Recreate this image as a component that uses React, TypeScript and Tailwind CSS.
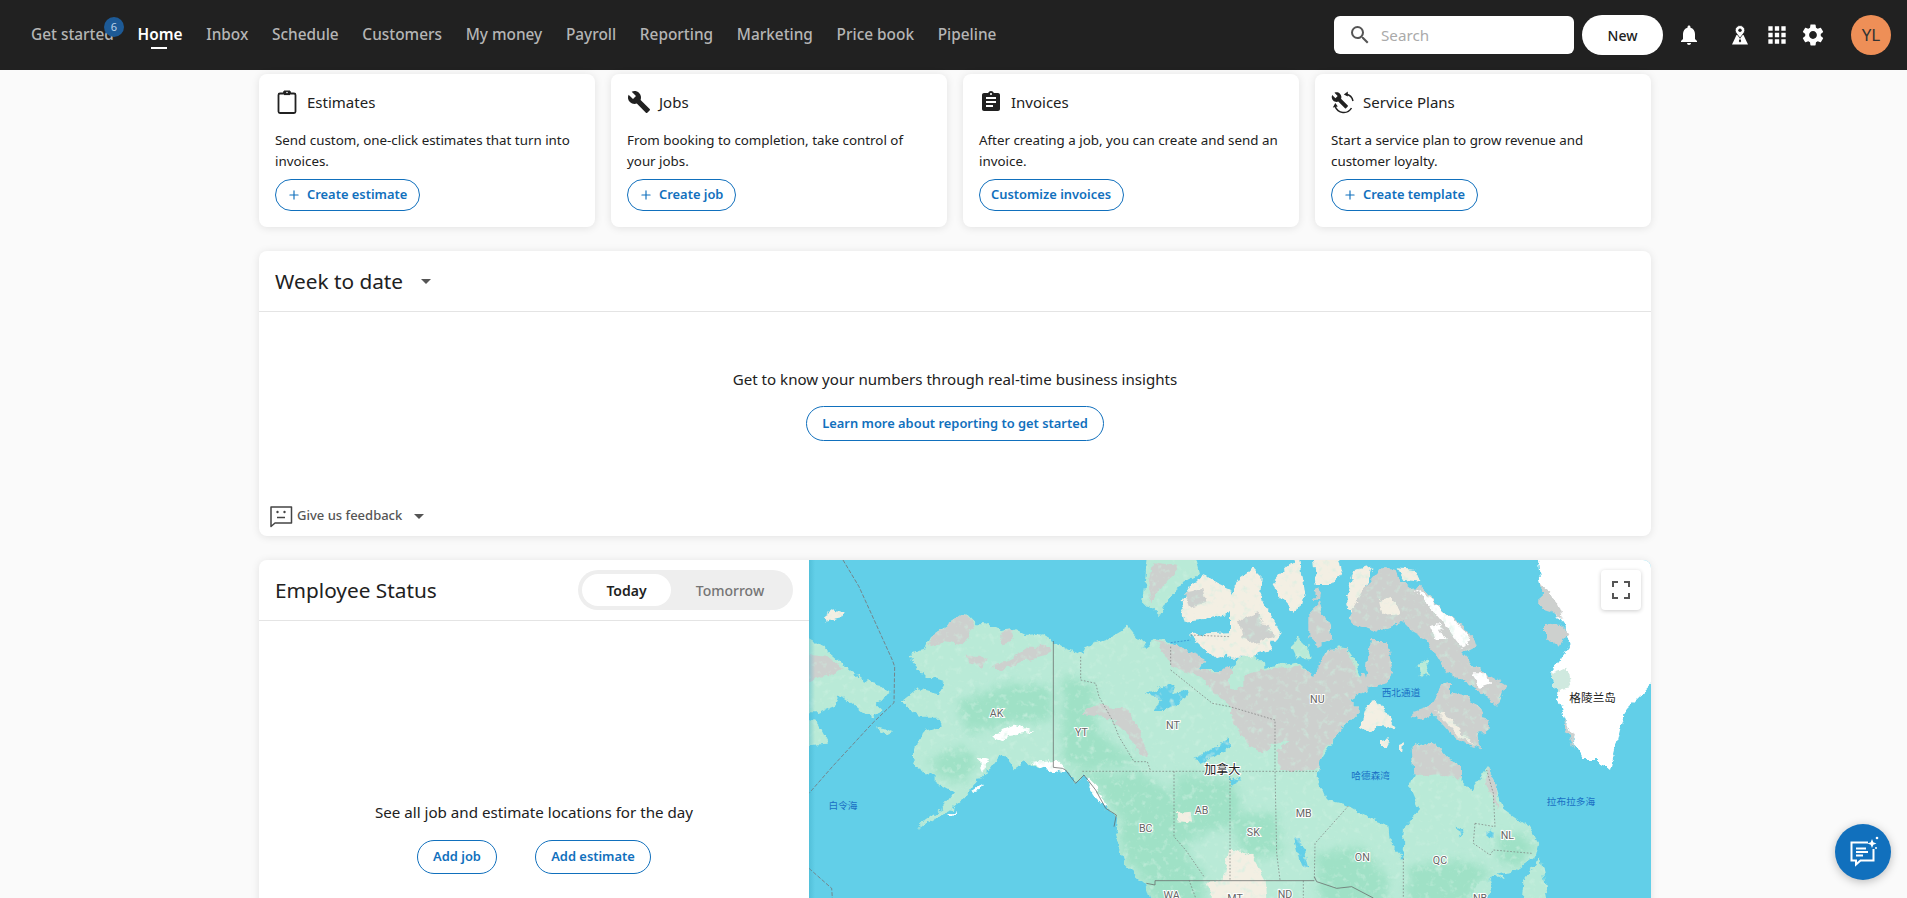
import type { ReactNode } from 'react';
import { Plus } from 'lucide-react';
import {
  MdApps,
  MdArrowDropDown,
  MdAssignment,
  MdBuild,
  MdNotifications,
  MdSearch,
  MdSettings,
} from 'react-icons/md';

const navLinks = ['Inbox', 'Schedule', 'Customers', 'My money', 'Payroll', 'Reporting', 'Marketing', 'Price book', 'Pipeline'];

function ClipboardIcon() {
  return (
    <svg width="24" height="24" viewBox="0 0 24 24" fill="none">
      <path d="M5 3.500h4V2h6v1.500h4a1.500 1.500 0 0 1 1.500 1.500v16.500A1.500 1.500 0 0 1 19 23H5a1.500 1.500 0 0 1-1.500-1.500V5A1.500 1.500 0 0 1 5 3.500Z" stroke="#212121" strokeWidth="1.800" strokeLinejoin="round" />
      <path d="M9 0.500h6v4.600H9z" fill="#212121" />
      <circle cx="12" cy="2.500" r="0.800" fill="#fff" />
    </svg>
  );
}

function ServicePlanIcon() {
  return (
    <svg width="24" height="24" viewBox="0 0 24 24" fill="none">
      <g transform="translate(0 1.500) scale(0.74)">
        <path fill="#212121" d="M22.700 19l-9.100-9.100c.9-2.300.4-5-1.500-6.900-2-2-5-2.400-7.400-1.300L9 6 6 9 1.600 4.700C.4 7.100.9 10.100 2.900 12.100c1.900 1.900 4.600 2.400 6.900 1.500l9.100 9.100c.4.400 1 .4 1.400 0l2.300-2.300c.5-.4.5-1.100.1-1.400z" />
      </g>
      <path d="M15 4.200a8.500 8.500 0 0 1 7 6.800" stroke="#212121" strokeWidth="1.500" />
      <path d="M4.200 16.500a9 9 0 0 0 16.300 1.500" stroke="#212121" strokeWidth="1.500" />
      <path d="M12.800 4.600l4-3v5zM1.800 17.500l5-1-2.500-3.500z" fill="#212121" />
    </svg>
  );
}

function TerritoryIcon() {
  return (
    <svg width="24" height="24" viewBox="0 0 24 24" fill="#fff">
      <path d="M8.500 12h7L20 21.500H4Z" />
      <path d="M12 2.500a4.800 4.800 0 0 1 4.800 4.800c0 2.700-3 4.700-4.800 8-1.800-3.300-4.800-5.300-4.800-8A4.800 4.800 0 0 1 12 2.500Z" stroke="#212121" strokeWidth="0.800" />
      <circle cx="12" cy="7.200" r="1.700" fill="#212121" />
      <path d="M11.200 16.500h1.600l.4 1.800-1.200 1.300-1.200-1.300Z" fill="#212121" />
    </svg>
  );
}

function FeedbackIcon() {
  return (
    <svg width="24" height="24" viewBox="0 0 24 24" fill="none">
      <path d="M2 3h20.500v16H6l-4 3.500Z" stroke="#444" strokeWidth="1.500" strokeLinejoin="round" />
      <circle cx="8.500" cy="8" r="1.200" fill="#444" />
      <circle cx="15.500" cy="8" r="1.200" fill="#444" />
      <path d="M8 13.500h8" stroke="#444" strokeWidth="1.500" />
    </svg>
  );
}

function OutlineButton({ children, className = '' }: { children: ReactNode; className?: string }) {
  return (
    <button className={`flex items-center justify-center rounded-full border border-[#1170bd] bg-white text-[12.9px] font-semibold text-[#1170bd] ${className}`}>
      {children}
    </button>
  );
}

function StartCard({ icon, title, text, action, plus }: { icon: ReactNode; title: string; text: string; action: string; plus?: boolean }) {
  return (
    <div className="h-[153px] rounded-lg bg-white px-4 pt-4 shadow-[0_1px_8px_rgba(0,0,0,0.1)]">
      <div className="flex h-6 items-center gap-2">
        {icon}
        <span className="text-[15px] text-[#212121]">{title}</span>
      </div>
      <p className="mt-4 text-[13.35px] leading-[21px] text-[#212121]">{text}</p>
      <OutlineButton className="mt-[7px] h-8 w-fit gap-[6px] pl-[11px] pr-3">
        {plus && <Plus size={14} strokeWidth={2} />}
        {action}
      </OutlineButton>
    </div>
  );
}

function TopNav() {
  return (
    <header className="flex h-[70px] items-center bg-[#212121] pl-[31px] pr-4">
      <nav className="-mt-px flex items-center gap-[23.7px] text-[15.4px] font-medium leading-5 text-[#b5b5b5]">
        <a className="relative">
          Get started
          <span className="absolute -top-[8px] left-[73px] flex h-5 w-5 items-center justify-center rounded-full bg-[#1d5a96] text-[11px] font-normal text-[#bcd4ea]">6</span>
        </a>
        <a className="relative font-semibold text-white">
          Home
          <span className="absolute -bottom-[4px] left-[13px] h-[2px] w-4 bg-white" />
        </a>
        {navLinks.map((l) => (
          <a key={l}>{l}</a>
        ))}
      </nav>
      <div className="ml-auto flex items-center">
        <div className="flex h-[38px] w-[240px] items-center rounded-md bg-white pl-[14px]">
          <MdSearch size={24} className="text-[#555]" />
          <span className="ml-[9px] -mt-px text-[15.2px] leading-5 text-[#aaa]">Search</span>
        </div>
        <button className="ml-2 h-10 w-[81px] rounded-full bg-white text-[14px] font-medium text-[#212121]">New</button>
        <MdNotifications size={24} className="ml-[14px] text-white" />
        <span className="ml-[27px]"><TerritoryIcon /></span>
        <MdApps size={26} className="ml-3 text-white" />
        <MdSettings size={26} className="ml-[10px] text-white" />
        <div className="ml-[25px] flex h-10 w-10 items-center justify-center rounded-full bg-[#ee8f57] text-[17px] text-[#333]">YL</div>
      </div>
    </header>
  );
}

const LAND = '#b9ead7';
const FOREST = '#9fe1c6';
const ROCK = '#cdd0ce';
const SNOW = '#f3efe3';
const SEA = '#62cfe8';

const MAINLAND =
  '305,285 345,270 365,230 410,200 470,158 500,190 530,190 570,210 610,205 650,225 700,220 735,245 770,265 820,285 830,260 900,235 960,200 1000,250 1005,260 1040,235 1080,245 1110,270 1190,295 1170,330 1225,330 1263,330 1293,290 1333,285 1373,320 1463,305 1513,355 1553,280 1593,262 1613,265 1638,300 1653,350 1663,340 1673,390 1623,420 1653,450 1603,500 1583,530 1553,570 1528,610 1523,650 1553,720 1613,735 1683,775 1738,795 1743,850 1783,895 1788,800 1833,750 1803,680 1818,640 1808,560 1833,545 1883,555 1913,590 1953,610 1953,660 1988,690 2033,625 2063,680 2083,750 2158,800 2188,850 2178,890 2123,930 2043,950 2013,975 1953,1070 1040,1070 1010,970 950,915 920,820 925,770 890,745 860,690 830,645 800,670 765,630 690,620 650,605 620,625 600,600 570,590 545,625 525,640 490,680 460,720 420,750 370,780 330,805 350,780 400,745 435,700 380,670 380,640 340,640 310,590 335,520 395,500 390,470 330,470 278,425 330,385 390,400 410,370 350,350 305,300';

function Poly({ p, f }: { p: string; f: string }) {
  return <polygon points={p} fill={f} />;
}

function MapLabel({ x, y, t, size = 32, color = '#666' }: { x: number; y: number; t: string; size?: number; color?: string }) {
  return (
    <text x={x} y={y} fontSize={size} fill={color} textAnchor="middle" dominantBaseline="central" stroke="#fff" strokeWidth={color === '#666' || color === '#222' ? 6 : 0} paintOrder="stroke" fontFamily="Roboto, 'Noto Sans CJK SC', sans-serif">
      {t}
    </text>
  );
}

// traced by hand, units are 1/3 px
function CanadaMap() {
  return (
    <svg width="842" height="338" viewBox="0 0 2526 1014" className="block">
      <defs>
        <clipPath id="mainland-clip">
          <polygon points={MAINLAND} />
        </clipPath>
        <filter id="soft" filterUnits="userSpaceOnUse" x="-50" y="-50" width="2650" height="1150">
          <feGaussianBlur stdDeviation="14" />
        </filter>
        <filter id="rough" filterUnits="userSpaceOnUse" x="-50" y="-50" width="2650" height="1150">
          <feTurbulence type="fractalNoise" baseFrequency="0.035" numOctaves="4" seed="7" result="n" />
          <feDisplacementMap in="SourceGraphic" in2="n" scale="26" xChannelSelector="R" yChannelSelector="G" />
        </filter>
        <filter id="rough-mottle" filterUnits="userSpaceOnUse" x="-50" y="-50" width="2650" height="1150">
          <feTurbulence type="fractalNoise" baseFrequency="0.035" numOctaves="4" seed="7" result="n" />
          <feDisplacementMap in="SourceGraphic" in2="n" scale="26" xChannelSelector="R" yChannelSelector="G" result="land" />
          <feTurbulence type="fractalNoise" baseFrequency="0.05" numOctaves="3" seed="21" />
          <feColorMatrix type="matrix" values="0 0 0 0 0.6  0 0 0 0 0.87  0 0 0 0 0.75  2 0 0 0 -1.1" result="spots" />
          <feComposite in="spots" in2="land" operator="in" result="a" />
          <feMerge>
            <feMergeNode in="land" />
            <feMergeNode in="a" />
          </feMerge>
        </filter>
      </defs>

      <rect width="2526" height="1014" fill={SEA} />

      <g filter="url(#rough-mottle)">
        {/* chukotka */}
        <Poly f={LAND} p="0,235 40,258 100,310 155,355 170,365 215,375 242,405 200,430 215,445 190,475 170,465 120,425 90,405 75,440 30,460 -40,460 -40,235" />
        <Poly f={ROCK} p="-40,280 50,290 105,325 60,345 -40,370" />
        <Poly f={LAND} p="-40,465 30,490 60,548 30,550 -40,558" />
        <Poly f={SNOW} p="45,170 75,148 110,160 100,175 50,185" />
        <Poly f={LAND} p="208,500 225,505 258,518 240,527 212,512" />

        {/* mainland */}
        <Poly f={LAND} p={MAINLAND} />
        <g clipPath="url(#mainland-clip)">
          <g filter="url(#soft)">
            <Poly f={FOREST} p="760,640 860,640 1000,640 1095,700 1120,860 1185,950 1190,1070 1040,1070 1010,960 950,905 930,820 940,770 900,740 870,680" />
            <Poly f={FOREST} p="1100,640 1263,660 1300,720 1263,800 1180,820 1130,860 1100,800" />
            <Poly f={FOREST} p="1263,760 1400,760 1420,880 1300,900" />
            <Poly f={FOREST} p="1520,880 1660,860 1740,960 1720,1070 1540,1070" />
            <Poly f={FOREST} p="1800,920 1950,900 2050,930 2010,975 1953,1070 1790,1070" />
            <Poly f={FOREST} p="2060,830 2140,820 2180,860 2120,925 2070,900" />
            <Poly f={FOREST} p="760,340 860,380 860,500 920,560 1000,610 820,630 760,600" />
            <Poly f={FOREST} p="440,430 600,370 730,380 730,480 600,490 480,520" />
            <Poly f={FOREST} p="360,600 450,560 510,600 470,660 400,660" />
          </g>
        </g>

        {/* prairies */}
        <Poly f={SNOW} p="1263,860 1330,890 1370,960 1380,1070 1240,1070 1190,965 1240,960" />
        <Poly f={SNOW} p="1100,760 1145,755 1150,785 1105,780" />

        {/* tundra */}
        <Poly f={ROCK} p="365,230 410,200 470,158 495,200 460,250 410,240 360,262" />
        <Poly f={ROCK} p="570,215 610,205 620,240 580,250" />
        <Poly f={ROCK} p="550,320 610,290 660,260 730,260 730,280 650,300 580,328" />
        <Poly f={ROCK} p="470,290 530,290 520,320 480,310" />
        <Poly f={ROCK} p="810,460 860,435 950,445 985,500 1020,590 980,570 950,510 900,475" />
        <Poly f={ROCK} p="1040,240 1080,250 1190,295 1170,330 1225,335 1263,320 1263,440 1230,410 1170,350 1090,320" />
        <Poly f={ROCK} p="1263,390 1303,380 1303,350 1353,330 1473,320 1513,350 1553,270 1613,265 1648,350 1663,340 1673,390 1623,420 1653,450 1603,500 1583,530 1543,570 1528,630 1413,630 1403,570 1443,540 1398,550 1363,580 1323,560 1293,520 1263,470" />
        <Poly f={ROCK} p="1813,640 1808,560 1833,545 1883,555 1913,590 1953,610 1953,660 1923,650 1883,640 1838,645" />
        <Poly f={ROCK} p="2033,625 2063,680 2068,750 2053,720 2033,670" />
        <Poly f="#fff" p="670,605 740,600 770,630 760,640 700,625" />
        <Poly f="#fff" p="510,590 540,600 520,640 512,620" />
        <Poly f="#fff" p="550,525 610,500 680,515 600,525 560,545" />
        <Poly f="#fff" p="835,650 865,680 890,740 870,730 840,680" />
        <Poly f="#fff" p="490,690 520,670 500,700" />
        <Poly f="#fff" p="410,765 440,750 430,765" />

        {/* lakes */}
        <Poly f={SEA} p="1010,400 1060,380 1100,370 1090,395 1135,390 1125,420 1075,450 1040,450 1060,415" />
        <Poly f={SEA} p="1150,600 1190,580 1230,550 1263,530 1263,560 1220,590 1180,605" />
        <Poly f={SEA} p="1263,650 1298,660 1263,675" />
        <Poly f={SEA} p="1453,830 1473,835 1498,925 1478,920" />
        <Poly f={SEA} p="1940,800 1965,810 1950,830" />
        <Poly f={SEA} p="2030,820 2060,810 2050,835" />

        {/* arctic islands */}
        <Poly f={LAND} p="1020,-40 1150,-40 1170,40 1100,80 1050,165 1000,120" />
        <Poly f={ROCK} p="1030,10 1110,20 1060,80 1030,130 1015,80" />
        <Poly f={SNOW} p="1115,125 1150,70 1190,45 1220,70 1263,90 1263,160 1180,180 1130,185" />
        <Poly f={ROCK} p="1125,100 1180,90 1190,130 1140,140" />
        <Poly f={SNOW} p="1140,225 1263,220 1263,285 1220,300 1190,270" />
        <Poly f={SNOW} p="1263,100 1293,50 1333,25 1358,50 1353,110 1418,225 1403,245 1383,245 1393,270 1323,290 1263,290" />
        <Poly f={ROCK} p="1290,180 1340,160 1400,230 1340,250 1300,230" />
        <Poly f={SNOW} p="1388,70 1438,15 1473,-10 1488,100 1478,140 1453,155 1413,110" />
        <Poly f={SNOW} p="1513,-20 1588,-20 1598,30 1563,75 1523,75" />
        <Poly f={ROCK} p="1518,90 1535,85 1530,125 1515,125" />
        <Poly f={ROCK} p="1498,160 1528,130 1563,200 1568,240 1528,260 1498,230" />
        <Poly f={LAND} p="1448,260 1468,235 1503,270 1508,295 1463,295" />
        <Poly f={SNOW} p="1608,110 1638,30 1688,20 1668,90 1673,150 1623,160" />
        <Poly f={ROCK} p="1613,175 1683,60 1713,25 1753,25 1763,50 1803,85 1833,80 1903,150 1993,230 2003,260 1963,280 1998,320 2088,375 2063,440 2023,400 1963,360 1913,340 1853,240 1808,215 1783,190 1703,215 1623,190" />
        <Poly f={SNOW} p="1763,25 1823,30 1838,65 1783,60" />
        <Poly f="#fff" p="1818,85 1863,115 1913,160 1983,230 1963,270 1903,190" />
        <Poly f={SNOW} p="1710,120 1750,110 1770,160 1720,165" />
        <Poly f="#fff" p="1868,200 1888,195 1913,240 1883,240" />
        <Poly f="#fff" p="1988,340 2033,340 2043,370 2013,380" />
        <Poly f={ROCK} p="1683,240 1733,240 1753,340 1733,370 1663,385 1673,330" />
        <Poly f={LAND} p="1828,310 1853,305 1863,340 1833,355" />
        <Poly f={ROCK} p="1818,455 1863,440 1903,370 1923,365 1923,400 1963,400 2003,440 2038,490 2033,520 2008,520 2013,565 1963,545 1923,520 1873,460 1833,480 1808,465" />
        <Poly f={SNOW} p="1880,450 1920,470 1990,550 1940,520" />
        <Poly f={SNOW} p="1678,430 1703,425 1753,490 1763,500 1733,505 1703,500 1683,520 1653,500" />
        <Poly f={SNOW} p="1713,540 1743,535 1733,555 1713,555" />
        <Poly f={SNOW} p="1773,555 1785,550 1783,575 1773,570" />

        {/* atlantic */}
        <Poly f={LAND} p="2193,890 2228,1070 2133,1070 2143,970" />
        <Poly f={LAND} p="2043,935 2088,955 2073,960" />
        <Poly f={LAND} p="1963,1070 2003,975 2040,955 2045,975 2020,1070" />
      </g>

      {/* greenland */}
      <g filter="url(#rough)">
        <Poly f="#fff" p="2183,-40 2570,-40 2570,330 2453,445 2433,510 2403,630 2363,600 2323,600 2283,520 2263,470 2223,340 2283,260 2263,190 2213,130 2193,60" />
        <Poly f="#cfe9df" p="2223,340 2275,320 2285,385 2255,390 2240,400" />
        <Poly f={ROCK} p="2198,70 2243,130 2263,180 2223,150 2193,140" />
        <Poly f={ROCK} p="2208,190 2253,195 2278,220 2248,260 2208,240" />
        <Poly f={ROCK} p="2265,480 2290,530 2300,570 2270,510" />
      </g>

      {/* borders */}
      <g fill="none" stroke="#666" strokeWidth="2.200">
        <polyline points="733,243 733,622 760,625 770,630 800,670 825,645 860,690 890,745 922,765 915,800" />
        <polyline points="1012,970 1038,975 1038,962 1516,962" />
        <polyline points="1516,950 1523,965 1583,985 1628,980 1693,1014" />
      </g>
      <g fill="none" stroke="#777" strokeWidth="2" strokeDasharray="5 5">
        <polyline points="820,634 1523,634" />
        <polyline points="815,290 815,360 860,370 870,410 910,480 930,530 975,605 1015,605 1025,634" />
        <polyline points="1085,330 1210,430 1263,440 1398,480 1398,630 1403,880 1413,960" />
        <polyline points="1263,634 1263,960" />
        <polyline points="1095,634 1095,830 1130,870 1185,950" />
        <polyline points="1618,738 1518,850 1516,960" />
        <polyline points="1783,895 1783,1014" />
        <polyline points="1998,790 2058,800 2053,700 2033,630" />
        <polyline points="1998,790 1993,850 2043,885 2053,870 2168,880" />
        <polyline points="1145,225 1263,230" />
        <polyline points="1085,260 1085,320" />
        <polyline points="1140,960 1160,1014" />
        <polyline points="1483,962 1483,1014" />
      </g>
      <polyline points="1085,248 1145,240" fill="none" stroke="#2a7fc9" strokeWidth="2" strokeDasharray="6 4" />
      <g fill="none" stroke="#7a6a6a" strokeWidth="2.200" strokeDasharray="12 5">
        <polyline points="102,0 150,80 250,300 257,320 255,428 190,490 70,620 0,700" />
        <polyline points="0,925 68,985 70,1014" />
      </g>

      {/* labels */}
      <MapLabel x={563} y={459} t="AK" />
      <MapLabel x={817} y={516} t="YT" />
      <MapLabel x={1092} y={497} t="NT" />
      <MapLabel x={1178} y={750} t="AB" />
      <MapLabel x={1010} y={806} t="BC" />
      <MapLabel x={1088} y={1005} t="WA" />
      <MapLabel x={1525} y={417} t="NU" />
      <MapLabel x={1484} y={759} t="MB" />
      <MapLabel x={1333} y={816} t="SK" />
      <MapLabel x={1660} y={893} t="ON" />
      <MapLabel x={1893} y={900} t="QC" />
      <MapLabel x={2095} y={825} t="NL" />
      <MapLabel x={1428} y={1002} t="ND" />
      <MapLabel x={1278} y={1014} t="MT" />
      <MapLabel x={2013} y={1014} t="NB" />
      <MapLabel x={102} y={735} t="白令海" size={29} color="#1a6fc4" />
      <MapLabel x={1776} y={397} t="西北通道" size={29} color="#1a6fc4" />
      <MapLabel x={1685} y={645} t="哈德森湾" size={29} color="#1a6fc4" />
      <MapLabel x={2286} y={723} t="拉布拉多海" size={29} color="#1a6fc4" />
      <MapLabel x={1240} y={630} t="加拿大" size={36} color="#222" />
      <MapLabel x={2351} y={414} t="格陵兰岛" size={35} color="#222" />
    </svg>
  );
}

export default function App() {
  return (
    <div className="relative h-screen overflow-hidden bg-[#fafafa] font-['Noto_Sans',sans-serif] text-[#212121]">
      <TopNav />

      <main className="ml-[259px] w-[1392px] pt-1">
        <div className="grid grid-cols-4 gap-4">
          <StartCard icon={<ClipboardIcon />} title="Estimates" text="Send custom, one-click estimates that turn into invoices." action="Create estimate" plus />
          <StartCard icon={<MdBuild size={24} color="#212121" />} title="Jobs" text="From booking to completion, take control of your jobs." action="Create job" plus />
          <StartCard icon={<MdAssignment size={24} color="#212121" />} title="Invoices" text="After creating a job, you can create and send an invoice." action="Customize invoices" />
          <StartCard icon={<ServicePlanIcon />} title="Service Plans" text="Start a service plan to grow revenue and customer loyalty." action="Create template" plus />
        </div>

        <section className="mt-6 flex h-[285px] flex-col rounded-lg bg-white shadow-[0_1px_8px_rgba(0,0,0,0.1)]">
          <div className="flex h-[61px] shrink-0 items-center border-b border-[#e4e4e4] pl-4">
            <h2 className="mt-[2px] text-[20.8px] text-[#212121]">Week to date</h2>
            <MdArrowDropDown size={24} className="ml-[11px] text-[#555]" />
          </div>
          <div className="flex flex-1 flex-col items-center pt-14">
            <p className="text-[15.1px] leading-[22px] text-[#212121]">Get to know your numbers through real-time business insights</p>
            <OutlineButton className="mt-4 h-[35px] w-[298px]">Learn more about reporting to get started</OutlineButton>
          </div>
          <div className="flex items-center pb-2 pl-[10px] text-[13px] font-medium text-[#555]">
            <FeedbackIcon />
            <span className="ml-[4px]">Give us feedback</span>
            <MdArrowDropDown size={24} className="ml-[5px]" />
          </div>
        </section>

        <section className="mt-6 flex h-[400px] overflow-hidden rounded-lg bg-white shadow-[0_1px_8px_rgba(0,0,0,0.1)]">
          <div className="w-[550px] shrink-0">
            <div className="flex h-[61px] items-center justify-between border-b border-[#e4e4e4] pl-4 pr-4">
              <h2 className="mt-[2px] text-[20.8px] text-[#212121]">Employee Status</h2>
              <div className="flex h-10 w-[215px] rounded-full bg-[#eeeeee] p-1 text-[14px] font-medium">
                <span className="flex w-[89px] items-center justify-center rounded-full bg-white font-semibold text-[#212121]">Today</span>
                <span className="flex flex-1 items-center justify-center text-[#757575]">Tomorrow</span>
              </div>
            </div>
            <div className="flex flex-col items-center pt-[180px]">
              <p className="text-[15.15px] leading-[22px] text-[#212121]">See all job and estimate locations for the day</p>
              <div className="mt-[17px] flex gap-[38px]">
                <OutlineButton className="h-[34px] w-20">Add job</OutlineButton>
                <OutlineButton className="h-[34px] w-[116px]">Add estimate</OutlineButton>
              </div>
            </div>
          </div>
          <div className="relative flex-1">
            <CanadaMap />
            <div className="absolute inset-y-0 left-0 w-[6px] bg-gradient-to-r from-[#3aa9c4]/40 to-transparent" />
            <button className="absolute right-[10px] top-[10px] flex h-10 w-10 items-center justify-center rounded-sm bg-white shadow-[0_1px_4px_rgba(0,0,0,0.2)]">
              <svg width="18" height="18" viewBox="0 0 18 18" fill="none" stroke="#555" strokeWidth="2">
                <path d="M1 6V1h5M12 1h5v5M17 12v5h-5M6 17H1v-5" />
              </svg>
            </button>
          </div>
        </section>
      </main>

      <button className="absolute bottom-[18px] right-4 flex h-14 w-14 items-center justify-center rounded-full bg-[#1170bd] shadow-[0_2px_10px_rgba(0,0,0,0.25)]">
        <svg width="32" height="32" viewBox="0 0 32 32" fill="none">
          <path d="M21 6.500H4.500v18H9v4l4.500-4H26.500V13" stroke="#fff" strokeWidth="2" />
          <path d="M9 12.500h10M9 16h12M9 19.500h7" stroke="#fff" strokeWidth="2" />
          <path d="M25 3l1.300 3.200L29.500 7.500l-3.200 1.300L25 12l-1.300-3.200L20.500 7.500l3.200-1.300Z" fill="#fff" />
          <circle cx="30" cy="2" r="1.300" fill="#fff" />
          <circle cx="29" cy="12" r="1" fill="#fff" />
        </svg>
      </button>
    </div>
  );
}
